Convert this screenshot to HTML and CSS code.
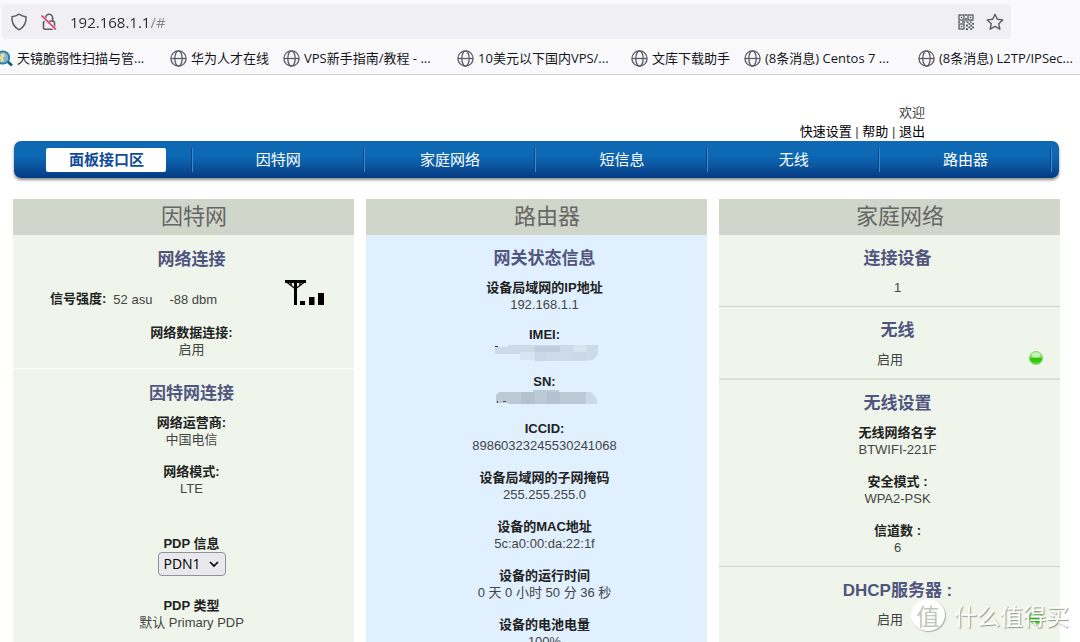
FILE: index.html
```html
<!DOCTYPE html>
<html lang="zh-CN">
<head>
<meta charset="utf-8">
<title>192.168.1.1</title>
<link rel="stylesheet" href="styles.css">
</head>
<body>
<svg class="defs" width="0" height="0" aria-hidden="true">
  <symbol id="globe" viewBox="0 0 17 17">
    <g fill="none" stroke="#5b5b66" stroke-width="1.3">
      <circle cx="8.5" cy="8.5" r="7.6"/>
      <ellipse cx="8.5" cy="8.5" rx="3.7" ry="7.6"/>
      <path d="M1 8.5h15" stroke-width="1.3"/>
    </g>
  </symbol>
  <symbol id="led" viewBox="0 0 14 14">
    <circle cx="7" cy="7" r="6.5" fill="url(#ledFill)" stroke="#7ccf5c" stroke-width=".8"/>
    <ellipse cx="7" cy="4" rx="4.4" ry="2.6" fill="#fff" opacity=".5"/>
  </symbol>
  <linearGradient id="ledFill" x1="0" y1="0" x2="0" y2="1">
    <stop offset="0" stop-color="#b5f09a"/>
    <stop offset=".5" stop-color="#6ad844"/>
    <stop offset=".52" stop-color="#2fc40c"/>
    <stop offset=".8" stop-color="#38cc14"/>
    <stop offset="1" stop-color="#8ae664"/>
  </linearGradient>
</svg>

<header class="browser">
  <div class="address-bar">
    <svg width="18" height="18" viewBox="0 0 18 18"><path d="M9 1.2C11 2.6 13.5 3.5 16 3.7C16.4 9 14 14 9 16.8C4 14 1.6 9 2 3.7C4.500 3.500 7 2.600 9 1.200Z" fill="none" stroke="#5b5b66" stroke-width="1.5" stroke-linejoin="round"/></svg>
    <svg width="18" height="18" viewBox="0 0 18 18"><g fill="none" stroke="#5b5b66" stroke-width="1.6"><rect x="3.500" y="8.300" width="11" height="8" rx="1.500"/><path d="M5.600 8V4.800a3.500 3.500 0 0 1 7 0V8"/></g><path d="M1.500 3L16 17" stroke="#f0f0f4" stroke-width="3.200"/><path d="M1.500 2.500L16 16.500" stroke="#e22850" stroke-width="1.500"/></svg>
    <input class="url" type="text" aria-label="地址" value="192.168.1.1/#">
    <svg width="16" height="16" viewBox="0 0 16 16"><g fill="none" stroke="#5b5b66" stroke-width="1.300"><rect x="1" y="1" width="5" height="5"/><rect x="10" y="1" width="5" height="5"/><rect x="1" y="10" width="5" height="5"/></g><path fill="#5b5b66" d="M2.800 2.800h1.500v1.500H2.800zM11.800 2.800h1.500v1.500h-1.500zM2.800 11.800h1.500v1.500H2.800zM7.200 0h1.500v2H7.200zM7.200 4h1.500v3.200H7.200zM0 7.200h2v1.500H0zM4 7.200h3v1.500H4zM8.700 7.200h1.800v1.800H8.700zM12 7.200h1.800v1.500H12zM10.500 9h1.700v1.700h-1.700zM14 9h2v1.700h-2zM8 10.500h2v2H8zM12.200 10.700h1.800v1.800h-1.800zM10.300 12.500h1.900v1.700h-1.900zM14 12.500h2v1.700h-2zM8 14.200h2V16H8zM12.200 14.200h1.800V16h-1.800z"/></svg>
    <svg width="18" height="18" viewBox="0 0 18 18"><path d="M9 1.300L11.300 6.300L16.800 6.900L12.700 10.700L13.900 16.200L9 13.400L4.100 16.200L5.300 10.700L1.200 6.900L6.700 6.300Z" fill="none" stroke="#5b5b66" stroke-width="1.400" stroke-linejoin="round"/></svg>
  </div>
  <nav class="bookmarks" aria-label="书签">
    <a class="bookmark cut" href="#"><svg width="17" height="17" viewBox="0 0 17 17"><path d="M11 11l5 4.500" stroke="#1d5f74" stroke-width="3"/><circle cx="7" cy="7.500" r="6.200" fill="#7db4dc" stroke="#2b7d9e" stroke-width="1.800"/><path d="M5 4l3-1 1 3-2 2 1 3-3 1-1-4z" fill="#f0d98a"/></svg>天镜脆弱性扫描与管...</a>
    <a class="bookmark" href="#"><svg width="17" height="17"><use href="#globe"/></svg>华为人才在线</a>
    <a class="bookmark cut" href="#"><svg width="17" height="17"><use href="#globe"/></svg>VPS新手指南/教程 - ...</a>
    <a class="bookmark cut" href="#"><svg width="17" height="17"><use href="#globe"/></svg>10美元以下国内VPS/...</a>
    <a class="bookmark" href="#"><svg width="17" height="17"><use href="#globe"/></svg>文库下载助手</a>
    <a class="bookmark cut" href="#"><svg width="17" height="17"><use href="#globe"/></svg>(8条消息) Centos 7 ...</a>
    <a class="bookmark cut" href="#"><svg width="17" height="17"><use href="#globe"/></svg>(8条消息) L2TP/IPSec...</a>
  </nav>
</header>

<main class="page">
  <div class="account">
    <div>欢迎</div>
    <div><a href="#">快速设置</a> | <a href="#">帮助</a> | <a href="#">退出</a></div>
  </div>

  <nav class="menu" aria-label="主菜单">
    <div class="menu-cell"><a class="active" href="#">面板接口区</a></div>
    <div class="menu-cell"><a href="#">因特网</a></div>
    <div class="menu-cell"><a href="#">家庭网络</a></div>
    <div class="menu-cell"><a href="#">短信息</a></div>
    <div class="menu-cell"><a href="#">无线</a></div>
    <div class="menu-cell"><a href="#">路由器</a></div>
  </nav>

  <div class="columns">
    <article class="column internet">
      <h2>因特网</h2>
      <section>
        <h3>网络连接</h3>
        <div class="signal">
          <b>信号强度:</b><span>52 asu</span><span class="dbm">-88 dbm</span>
          <svg width="41" height="26" viewBox="0 0 41 26"><path d="M1 1.500h21M11.500 1v24" stroke="#000" stroke-width="3"/><path d="M2.500 2l8.500 6.500M20.500 2L12 8.500M7 2v3M16 2v3" fill="none" stroke="#111" stroke-width="1.500"/><path d="M16 21h5v4h-5zM25 17h5.500v8H25zM34 13h6v12h-6z"/></svg>
        </div>
        <dl><dt>网络数据连接:</dt><dd>启用</dd></dl>
      </section>
      <section>
        <h3>因特网连接</h3>
        <dl><dt>网络运营商:</dt><dd>中国电信</dd></dl>
        <dl><dt>网络模式:</dt><dd>LTE</dd></dl>
        <div class="field">
          <label for="pdp">PDP 信息</label>
          <select id="pdp"><option>PDN1</option></select>
        </div>
        <dl><dt>PDP 类型</dt><dd>默认 Primary PDP</dd></dl>
      </section>
    </article>

    <article class="column router">
      <h2>路由器</h2>
      <section>
        <h3>网关状态信息</h3>
        <dl class="tight"><dt>设备局域网的IP地址</dt><dd>192.168.1.1</dd></dl>
        <dl class="tight"><dt>IMEI:</dt><dd><svg width="106" height="19" viewBox="-2 -1 106 19"><path fill="#cddbe9" d="M1 3h12l2-2h90v8l-6 7-10 1H40v-1H26v-6H1z"/><path fill="#d8e4f0" d="M26 8h15v8H26zM80 1h12v7H80z"/><path fill="#bfcddd" d="M41 2h25v6H41z"/><path fill="#cad7e6" d="M41 8h12v9H41zM80 8h13v8H80z"/><path fill="#333" d="M1 2h3v1H1z"/></svg></dd></dl>
        <dl class="tight"><dt>SN:</dt><dd><svg width="104" height="17" viewBox="-2 2 104 17"><path fill="#bdc9d5" d="M4 4h34V2h26v2h27v12H14l-1-1H1V7z"/><path fill="#b4c2d0" d="M26 4h14v12H26zM52 4h13v12H52z"/><path fill="#cbdae8" d="M91 4h5l7 8v4H91z"/><path fill="#554a44" d="M2 13h1v2H2zM8 13h3v1H8z"/></svg></dd></dl>
        <dl><dt>ICCID:</dt><dd>89860323245530241068</dd></dl>
        <dl><dt>设备局域网的子网掩码</dt><dd>255.255.255.0</dd></dl>
        <dl><dt>设备的MAC地址</dt><dd>5c:a0:00:da:22:1f</dd></dl>
        <dl><dt>设备的运行时间</dt><dd>0 天 0 小时 50 分 36 秒</dd></dl>
        <dl><dt>设备的电池电量</dt><dd>100%</dd></dl>
      </section>
    </article>

    <article class="column home">
      <h2>家庭网络</h2>
      <section>
        <h3>连接设备</h3>
        <p>1</p>
      </section>
      <section class="wireless">
        <h3>无线</h3>
        <div class="state"><span>启用</span><svg width="14" height="14"><use href="#led"/></svg></div>
      </section>
      <section>
        <h3>无线设置</h3>
        <dl><dt>无线网络名字</dt><dd>BTWIFI-221F</dd></dl>
        <dl><dt>安全模式 :</dt><dd>WPA2-PSK</dd></dl>
        <dl><dt>信道数 :</dt><dd>6</dd></dl>
      </section>
      <section>
        <h3>DHCP服务器 :</h3>
        <div class="state"><span>启用</span><svg width="14" height="14"><use href="#led"/></svg></div>
      </section>
    </article>
  </div>
</main>
<div class="watermark"><span class="seal">值</span><span>什么值得买</span></div>
</body>
</html>
```

FILE: styles.css
```css
* { box-sizing: border-box; }

body {
  margin: 0;
  height: 100vh;
  overflow: hidden;
  position: relative;
  background: #fff;
  color: #444;
  font: 13px/17px "Liberation Sans", "Noto Sans CJK SC", sans-serif;
}

h2, h3, p, dl, dd { margin: 0; }
a { color: inherit; text-decoration: none; }
svg { display: block; flex: none; }
.defs { position: absolute; }

/* Browser toolbar */
.browser {
  padding-top: 4px;
  background: #f9f9fb;
  border-bottom: 1px solid #cfcfd6;
  font-family: "Open Sans", "Noto Sans CJK SC", sans-serif;
  color: #15141a;
}
.address-bar {
  display: flex;
  align-items: center;
  gap: 12px;
  height: 35px;
  margin: 0 69px 0 2px;
  padding: 0 7px 0 8px;
  border-radius: 4px;
  background: #f0f0f4;
}
.url {
  flex: 1;
  min-width: 0;
  padding: 0;
  border: 0;
  outline: 0;
  font: 15px/24px "Open Sans", sans-serif;
  color: transparent;
  background: linear-gradient(90deg, #2b2a33 80px, #85848c 80px);
  -webkit-background-clip: text;
  background-clip: text;
}
.bookmarks {
  display: flex;
  gap: 14px;
  height: 35px;
  padding-top: 4px;
  margin-left: -4px;
  overflow: hidden;
}
.bookmark {
  display: flex;
  align-items: center;
  gap: 4px;
  flex: none;
  white-space: nowrap;
}
.cut { width: 160px; }

/* Router page */
.page { padding: 28px 20px 0 13px; }
.account {
  padding-right: 135px;
  text-align: right;
  line-height: 19px;
}
.account a { color: #000; }

.menu {
  display: grid;
  grid-template-columns: repeat(6, 1fr);
  align-items: center;
  height: 37px;
  margin: 0 1px;
  padding: 0 7px;
  border-radius: 7px;
  background: linear-gradient(#1068b2, #0c69b4 40%, #0c57a1 65%, #053a82);
  box-shadow: 0 2px 3px rgba(0, 0, 0, .45);
}
.menu-cell {
  display: flex;
  justify-content: center;
  border-right: 1px solid #3a8bd0;
  box-shadow: inset -1px 0 #08417f;
}
.menu a {
  width: 120px;
  border-radius: 2px;
  font-size: 15px;
  line-height: 24px;
  text-align: center;
  color: #fff;
}
.menu .active {
  background: #fff;
  color: #114b99;
  font-weight: bold;
}

.columns {
  display: grid;
  grid-template-columns: repeat(3, 1fr);
  gap: 12px;
  margin-top: 21px;
  text-align: center;
}
.column { background: #eff5ea; }
.router { background: #e0f0fe; }
.column h2 {
  height: 36px;
  padding-left: 21px;
  background: #d1d6ca;
  font-size: 22px;
  line-height: 36px;
  font-weight: normal;
  color: #666;
}
.column section {
  padding: 12px 0 10px 16px;
  border-bottom: 1px solid #cfd5ca;
}
.column .wireless { border-bottom: 2px solid #dbe0d6; }
.column section:last-child { border-bottom: 0; }
.internet section {
  padding-top: 13px;
  border-bottom-color: #fff;
}
.column h3 {
  margin-bottom: 9px;
  font-size: 17px;
  line-height: 24px;
  color: #50557f;
}
.column p {
  margin-top: -1px;
}
dl + dl { margin-top: 16px; }
.tight + dl { margin-top: 14px; }
dt, .field label, .signal b {
  font-weight: bold;
  line-height: 16px;
  color: #222;
}
dd { height: 17px; }
dd svg { margin: 0 auto; }

.signal {
  display: flex;
  align-items: center;
  gap: 7px;
  height: 38px;
  margin: -1px 0 7px;
  padding: 0 29px 0 21px;
}
.signal .dbm { margin-left: 10px; }
.signal svg {
  align-self: flex-start;
  margin-left: auto;
}

.field {
  display: flex;
  flex-direction: column;
  align-items: center;
  margin: 39px 0 22px;
}
.field select {
  width: 68px;
  height: 24px;
  padding: 0 5px;
  border: 1px solid #8f8f9d;
  border-radius: 4px;
  appearance: none;
  font: 14px/20px "Open Sans", sans-serif;
  color: #000;
  background: #e9e9ed url("data:image/svg+xml,%3Csvg xmlns='http://www.w3.org/2000/svg' width='10' height='7'%3E%3Cpath d='M1 1l4 4 4-4' fill='none' stroke='%23000' stroke-width='1.600'/%3E%3C/svg%3E") no-repeat right 6px center;
}

.state {
  display: flex;
  align-items: flex-start;
  margin-top: -1px;
  padding: 0 17px 0 16px;
}
.state span { flex: 1; }

/* Site mark laid over the page corner */
.watermark {
  position: absolute;
  right: 11px;
  bottom: 11px;
  display: flex;
  align-items: center;
  gap: 9px;
  font: 23px/32px "Noto Sans CJK SC", sans-serif;
  color: #fff;
  text-shadow: 1px 1px 1px rgba(100, 110, 95, .7);
}
.seal {
  width: 34px;
  height: 32px;
  border-radius: 50%;
  background: #fff;
  box-shadow: 1px 1px 1px rgba(100, 110, 95, .5);
  text-align: center;
  color: #c2c6bd;
  text-shadow: none;
}
```
